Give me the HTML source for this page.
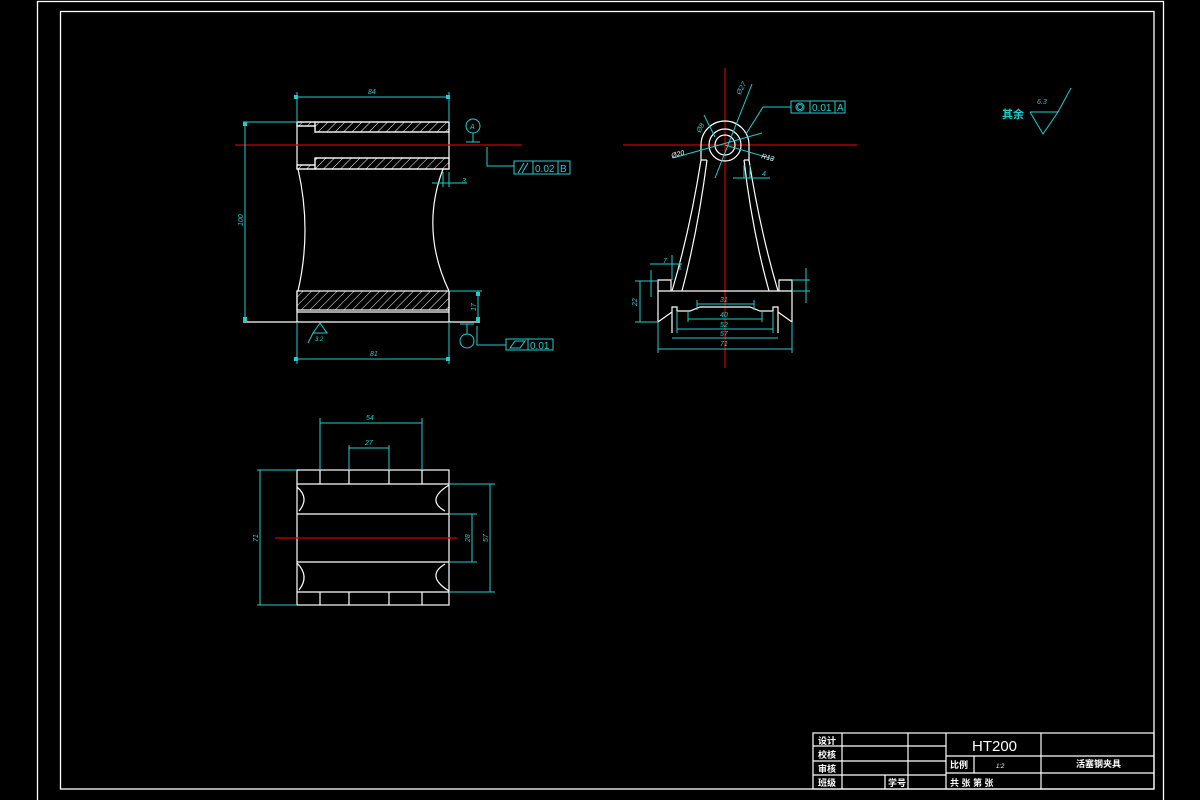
<!DOCTYPE html>
<html><head><meta charset="utf-8"><style>
html,body{margin:0;padding:0;background:#000;width:1200px;height:800px;overflow:hidden}
svg{display:block}
text{font-family:"Liberation Sans","Noto Sans CJK SC",sans-serif}
</style></head><body>
<svg width="1200" height="800" viewBox="0 0 1200 800" xmlns="http://www.w3.org/2000/svg">
<defs>
<pattern id="h" width="6" height="6" patternUnits="userSpaceOnUse" patternTransform="rotate(45)">
<line x1="0" y1="0" x2="0" y2="6" stroke="#fff" stroke-width="1"/>
</pattern>
</defs>
<rect width="1200" height="800" fill="#000"/>
<!-- frames -->
<g fill="none" stroke="#fff" stroke-width="1.3">
<rect x="37.5" y="1.5" width="1126" height="805"/>
<rect x="60.5" y="11.5" width="1093.5" height="777.5"/>
</g>

<!-- ========== MAIN VIEW ========== -->
<g fill="none" stroke="#fff" stroke-width="1.2">
<rect x="315" y="122" width="134" height="10" fill="url(#h)"/>
<rect x="297" y="122" width="18" height="4" fill="url(#h)"/>
<rect x="315" y="158" width="134" height="11" fill="url(#h)"/>
<rect x="297" y="165" width="18" height="4" fill="url(#h)"/>
<polyline points="297,122 449,122 449,169 297,169 297,122"/>
<polyline points="297,126 315,126 315,132 449,132"/>
<polyline points="297,165 315,165 315,158 449,158"/>
<path d="M298,169 Q312,230 298,291"/>
<path d="M443,169 Q420,230 449,291"/>
<rect x="297" y="291" width="152" height="19" fill="url(#h)"/>
<line x1="297" y1="312" x2="449" y2="312"/>
<line x1="297" y1="291" x2="297" y2="322"/>
<line x1="449" y1="291" x2="449" y2="322"/>
</g>
<line x1="243" y1="322" x2="480" y2="322" stroke="#fff" stroke-width="1.2"/>
<line x1="235" y1="145" x2="522" y2="145" stroke="#c00" stroke-width="1.2"/>
<g fill="none" stroke="#2cc" stroke-width="1">
<line x1="297" y1="92" x2="297" y2="122"/><line x1="449" y1="92" x2="449" y2="122"/>
<line x1="297" y1="97" x2="449" y2="97"/>
<line x1="243" y1="122" x2="297" y2="122"/>
<line x1="245" y1="122" x2="245" y2="322"/>
<line x1="297" y1="322" x2="297" y2="364"/><line x1="449" y1="322" x2="449" y2="364"/>
<line x1="297" y1="359" x2="449" y2="359"/>
<line x1="449" y1="291" x2="482" y2="291"/>
<line x1="478" y1="291" x2="478" y2="322"/>
<circle cx="473" cy="126" r="7"/><line x1="473" y1="133" x2="473" y2="142"/><line x1="466" y1="142" x2="480" y2="142"/>
<polyline points="487,147 487,166 514,166"/>
<rect x="514" y="161" width="56" height="13"/><line x1="533" y1="161" x2="533" y2="174"/><line x1="558" y1="161" x2="558" y2="174"/>
<line x1="518" y1="173" x2="524" y2="163"/><line x1="522" y1="173" x2="528" y2="163"/>
<line x1="443" y1="172" x2="443" y2="187"/><line x1="449" y1="172" x2="449" y2="187"/>
<line x1="432" y1="183" x2="467" y2="183"/>
<circle cx="467" cy="341" r="7"/><line x1="467" y1="334" x2="467" y2="324"/><line x1="460" y1="324" x2="474" y2="324"/>
<polyline points="477,326 477,345 506,345"/>
<rect x="506" y="339" width="47" height="11"/><line x1="528" y1="339" x2="528" y2="350"/>
<polygon points="510,348 515,341 525,341 520,348"/>
<polygon points="320,323 313,333 327,333"/><line x1="313" y1="333" x2="308" y2="343"/>
</g>
<g fill="#2cc" font-size="7" font-style="italic">
<text x="368" y="94">84</text>
<text x="370" y="356">81</text>
<text x="462" y="183">3</text>
<text x="470" y="129" font-size="7">A</text>
<text x="535" y="172" font-size="10" font-style="normal">0.02</text>
<text x="560" y="172" font-size="10" font-style="normal">B</text>
<text x="530" y="349" font-size="10" font-style="normal">0.01</text>
<text x="315" y="341" font-size="6">3.2</text>
<text transform="translate(243,226) rotate(-90)">100</text>
<text transform="translate(476,311) rotate(-90)">17</text>
</g>
<g fill="#2cc"><rect x="294" y="95" width="4" height="4"/><rect x="446" y="95" width="4" height="4"/><rect x="294" y="357" width="4" height="4"/><rect x="446" y="357" width="4" height="4"/><rect x="243" y="122" width="4" height="4"/><rect x="243" y="317" width="4" height="4"/><rect x="476" y="292" width="4" height="4"/><rect x="476" y="317" width="4" height="4"/></g>

<!-- ========== SIDE VIEW ========== -->
<line x1="725" y1="68" x2="725" y2="368" stroke="#c00" stroke-width="1.2"/>
<line x1="623" y1="145" x2="857" y2="145" stroke="#c00" stroke-width="1.2"/>
<g fill="none" stroke="#fff" stroke-width="1.2">
<path d="M701,160 L701,145 A24,24 0 0 1 749,145 L749,160"/>
<circle cx="725" cy="145" r="16"/>
<circle cx="725" cy="145" r="10"/>
<path d="M701,160 Q690,230 672,291"/>
<path d="M707,160 Q698,230 682,291"/>
<path d="M749,160 Q760,230 778,291"/>
<path d="M744,160 Q752,230 769,291"/>
<line x1="701" y1="160" x2="707" y2="160"/><line x1="744" y1="160" x2="749" y2="160"/>
<line x1="658" y1="291" x2="792" y2="291"/>
<polyline points="658,291 658,280 671,280 671,291"/>
<polyline points="792,291 792,280 779,280 779,291"/>
<polyline points="658,291 658,322 672,312"/>
<polyline points="792,291 792,322 778,312"/>
<polyline points="672,333 672,307 677,307 677,311 690,311 700,307 750,307 760,311 773,311 773,307 778,307 778,333"/>
</g>
<g fill="none" stroke="#2cc" stroke-width="1">
<line x1="697" y1="300" x2="697" y2="310"/><line x1="754" y1="300" x2="754" y2="310"/>
<line x1="697" y1="304" x2="754" y2="304"/>
<line x1="688" y1="312" x2="688" y2="322"/><line x1="762" y1="312" x2="762" y2="322"/>
<line x1="688" y1="319" x2="762" y2="319"/>
<line x1="677" y1="311" x2="677" y2="333"/><line x1="773" y1="311" x2="773" y2="333"/>
<line x1="677" y1="329" x2="773" y2="329"/>
<line x1="672" y1="338" x2="778" y2="338"/>
<line x1="658" y1="322" x2="658" y2="353"/><line x1="792" y1="322" x2="792" y2="353"/>
<line x1="658" y1="349" x2="792" y2="349"/>
<line x1="635" y1="281" x2="658" y2="281"/><line x1="635" y1="322" x2="658" y2="322"/>
<line x1="640" y1="281" x2="640" y2="322"/>
<line x1="651" y1="270" x2="651" y2="297"/>
<line x1="672" y1="255" x2="672" y2="280"/><line x1="680" y1="262" x2="680" y2="270"/>
<line x1="650" y1="264" x2="682" y2="264"/>
<line x1="792" y1="280" x2="810" y2="280"/><line x1="792" y1="291" x2="810" y2="291"/>
<line x1="806" y1="268" x2="806" y2="303"/>
<line x1="744" y1="165" x2="744" y2="178"/><line x1="750" y1="165" x2="750" y2="178"/>
<line x1="733" y1="178" x2="770" y2="178"/>
<line x1="715" y1="178" x2="752" y2="84"/>
<line x1="673" y1="158" x2="762" y2="133"/>
<line x1="725" y1="145" x2="773" y2="159"/>
<line x1="704" y1="115" x2="715" y2="137"/>
<polyline points="746,134 763,107 791,107"/>
<rect x="791" y="101" width="54" height="12"/><line x1="810" y1="101" x2="810" y2="113"/><line x1="835" y1="101" x2="835" y2="113"/>
<circle cx="800" cy="107" r="4"/><circle cx="800" cy="107" r="2.5"/>
</g>
<g fill="#2cc" font-size="7" font-style="italic">
<text x="720" y="302">31</text><text x="720" y="317">40</text><text x="720" y="327">52</text><text x="720" y="336">57</text><text x="720" y="346">71</text>
<text x="762" y="176">4</text>
<text x="663" y="263">7</text>
<text transform="translate(637,306) rotate(-90)">22</text>
<text transform="translate(740,95) rotate(-60)">Ø27</text>
<text transform="translate(700,133) rotate(-60)">Ø8</text>
<text x="812" y="111" font-size="10" font-style="normal">0.01</text>
<text x="837" y="111" font-size="10" font-style="normal">A</text>
</g>
<g fill="#fff" font-size="7" font-style="italic">
<text x="672" y="158" transform="rotate(-15 672 158)">Ø20</text>
<text x="761" y="158" transform="rotate(15 761 158)">R13</text>
</g>

<!-- ========== BOTTOM VIEW ========== -->
<g fill="none" stroke="#fff" stroke-width="1.2">
<rect x="297" y="470" width="152" height="135"/>
<line x1="297" y1="484" x2="449" y2="484"/><line x1="297" y1="514" x2="449" y2="514"/>
<line x1="297" y1="562" x2="449" y2="562"/><line x1="297" y1="592" x2="449" y2="592"/>
<line x1="320" y1="470" x2="320" y2="484"/><line x1="349" y1="470" x2="349" y2="484"/><line x1="389" y1="470" x2="389" y2="484"/><line x1="422" y1="470" x2="422" y2="484"/>
<line x1="320" y1="592" x2="320" y2="605"/><line x1="349" y1="592" x2="349" y2="605"/><line x1="389" y1="592" x2="389" y2="605"/><line x1="422" y1="592" x2="422" y2="605"/>
<path d="M297,487 Q310,498 299,511"/><path d="M297,563 Q310,576 299,590"/>
<path d="M449,485 Q425,500 445,511"/><path d="M445,564 Q425,576 449,591"/>
</g>
<line x1="275" y1="538" x2="457" y2="538" stroke="#c00" stroke-width="1.2"/>
<g fill="none" stroke="#2cc" stroke-width="1">
<line x1="320" y1="418" x2="320" y2="470"/><line x1="422" y1="418" x2="422" y2="470"/>
<line x1="320" y1="423" x2="422" y2="423"/>
<line x1="349" y1="445" x2="349" y2="470"/><line x1="389" y1="445" x2="389" y2="470"/>
<line x1="349" y1="448" x2="389" y2="448"/>
<line x1="257" y1="470" x2="297" y2="470"/><line x1="257" y1="605" x2="297" y2="605"/>
<line x1="260" y1="470" x2="260" y2="605"/>
<line x1="449" y1="484" x2="495" y2="484"/><line x1="449" y1="592" x2="495" y2="592"/>
<line x1="490" y1="484" x2="490" y2="592"/>
<line x1="449" y1="514" x2="477" y2="514"/><line x1="449" y1="562" x2="477" y2="562"/>
<line x1="472" y1="514" x2="472" y2="562"/>
</g>
<g fill="#2cc" font-size="7" font-style="italic">
<text x="366" y="420">54</text><text x="365" y="445">27</text>
<text transform="translate(258,542) rotate(-90)">71</text>
<text transform="translate(488,542) rotate(-90)">57</text>
<text transform="translate(470,542) rotate(-90)">28</text>
</g>

<!-- roughness note -->
<g fill="none" stroke="#2cc" stroke-width="1">
<polyline points="1030,112 1058,112 1043,134 1030,112"/><line x1="1058" y1="112" x2="1071" y2="88"/>
</g>
<text x="1002" y="118" fill="#2cc" font-size="11" font-weight="bold">其余</text>
<text x="1037" y="104" fill="#2cc" font-size="7" font-style="italic">6.3</text>

<!-- ========== TITLE BLOCK ========== -->
<g fill="none" stroke="#fff" stroke-width="1.2">
<rect x="813" y="733" width="341" height="56"/>
<line x1="813" y1="746" x2="946" y2="746"/><line x1="813" y1="761" x2="946" y2="761"/><line x1="813" y1="775" x2="946" y2="775"/>
<line x1="842" y1="733" x2="842" y2="789"/><line x1="908" y1="733" x2="908" y2="789"/><line x1="946" y1="733" x2="946" y2="789"/>
<line x1="885" y1="775" x2="885" y2="789"/>
<line x1="946" y1="756" x2="1154" y2="756"/><line x1="946" y1="773" x2="1154" y2="773"/>
<line x1="974" y1="756" x2="974" y2="773"/><line x1="1041" y1="733" x2="1041" y2="789"/>
</g>
<g fill="#fff" font-size="9" font-weight="bold">
<text x="818" y="744">设计</text><text x="818" y="758">校核</text><text x="818" y="772">审核</text><text x="818" y="786">班级</text>
<text x="888" y="786">学号</text>
<text x="950" y="768">比例</text>
<text x="950" y="786">共 张 第 张</text>
<text x="1076" y="767">活塞钢夹具</text>
</g>
<text x="972" y="751" fill="#fff" font-size="15" font-family="Liberation Serif,serif">HT200</text>
<text x="996" y="768" fill="#fff" font-size="6" font-style="italic">1:2</text>
</svg>
</body></html>
